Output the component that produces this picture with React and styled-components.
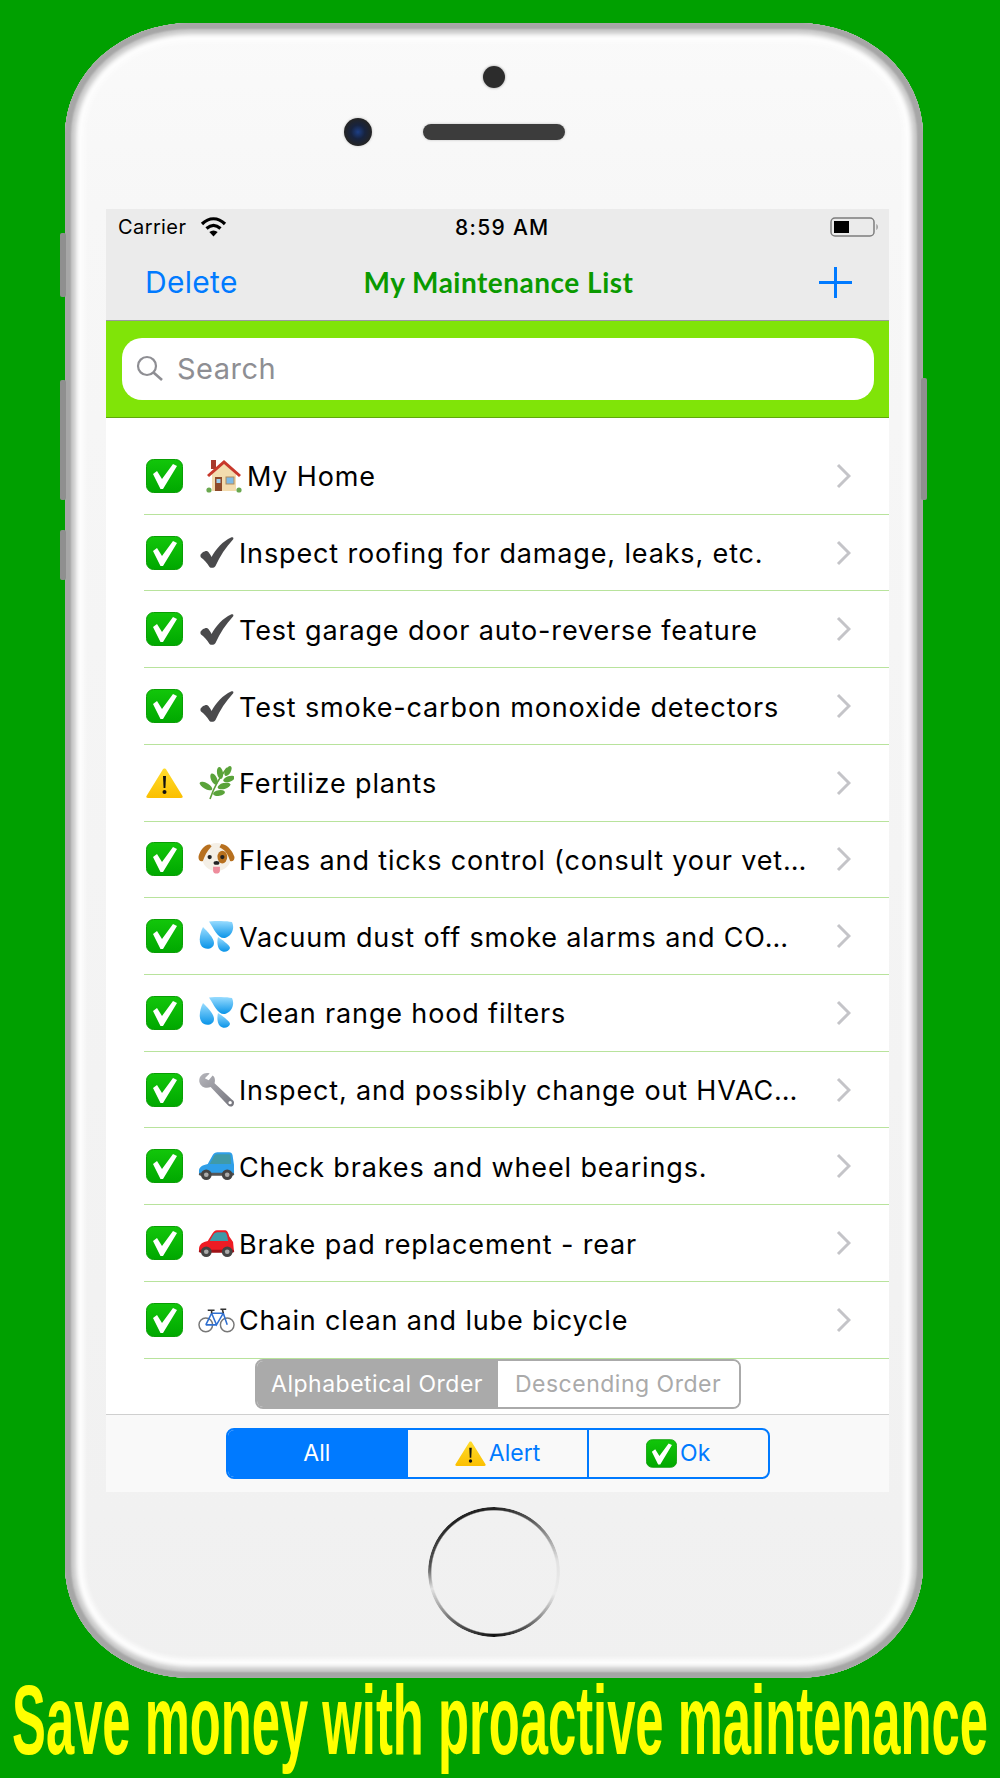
import React from 'react';
import styled, { createGlobalStyle } from 'styled-components';

const GlobalStyle = createGlobalStyle`
  html, body {
    margin: 0;
    padding: 0;
    background: #00a000;
    overflow: hidden;
  }
  body {
    font-family: Inter, "Liberation Sans", sans-serif;
  }
`;

const Page = styled.div`
  width: 1000px;
  height: 1778px;
  box-sizing: border-box;
  padding-top: 23px;
  background: #00a000;
  overflow: hidden;
`;

const Phone = styled.div`
  position: relative;
  width: 858px;
  height: 1655px;
  margin-left: 65px;
  box-sizing: border-box;
  padding: 0 34px 0 41px;
  border-radius: 125px / 112px;
  background: linear-gradient(#fafafa 0, #f7f7f7 11%, #f1f1f1 90%, #f0f0f0 100%);
  box-shadow:
    inset 0 0 0 1px #a8a8a8,
    inset 0 0 2px 6px #a6a6a6,
    inset 0 0 4px 11px #c9c9c9,
    inset 0 0 4px 19px #fdfdfd;
`;

const SideButton = styled.div`
  position: absolute;
  width: 6px;
  top: ${p => p.$top}px;
  height: ${p => p.$height}px;
  ${p => (p.$right ? 'right: -4px;' : 'left: -5px;')}
  background: #8f8f8f;
  border-radius: 2px;
`;

const TopBezel = styled.div`
  height: 186px;
  box-sizing: border-box;
  padding-top: 43px;
  display: flex;
  flex-direction: column;
  align-items: center;
`;

const Sensor = styled.div`
  width: 22px;
  height: 22px;
  margin-left: -7px;
  border-radius: 50%;
  background: #2c2c2c;
  box-shadow: 0 0 2px 1px #ccc;
`;

const SpeakerRow = styled.div`
  display: flex;
  align-items: center;
  gap: 51px;
  margin-top: 30px;
  margin-right: 86px;
`;

const Camera = styled.div`
  width: 28px;
  height: 28px;
  border-radius: 50%;
  background: radial-gradient(circle at 50% 50%, #1d3f86 0, #17233f 35%, #242424 70%);
  box-shadow: 0 0 2px 1px #ddd;
`;

const Speaker = styled.div`
  width: 142px;
  height: 16px;
  border-radius: 8px;
  background: #3c3c3c;
  box-shadow: 0 0 2px 1px #ddd;
`;

const Screen = styled.div`
  background: #fff;
  height: 1283px;
  display: flex;
  flex-direction: column;
`;

const StatusBar = styled.div`
  height: 38px;
  box-sizing: border-box;
  position: relative;
  display: flex;
  align-items: center;
  padding: 0 10px 2px 12px;
  background: #ebebeb;
  font-size: 20px;
  color: #000;
`;

const Carrier = styled.span`
  letter-spacing: 0.4px;
`;

const Clock = styled.span`
  position: absolute;
  left: 349px;
  font-size: 21px;
  font-weight: 500;
  letter-spacing: 1.3px;
`;

const NavBar = styled.div`
  height: 74px;
  box-sizing: border-box;
  display: grid;
  grid-template-columns: 1fr auto 1fr;
  align-items: center;
  padding: 0 37px 3px 39px;
  background: #ebebeb;
  border-bottom: 1px solid #9b9b9b;
`;

const NavButton = styled.span`
  font-size: 30px;
  color: #007aff;
  letter-spacing: 0.3px;
`;

const NavAction = styled.span`
  display: flex;
  justify-content: flex-end;
`;

const NavTitle = styled.span`
  font-family: Lato, sans-serif;
  font-size: 28px;
  font-weight: 700;
  color: #0a9a00;
  letter-spacing: 0.5px;
`;

const SearchBar = styled.div`
  height: 97px;
  box-sizing: border-box;
  padding: 17px 15px 0 16px;
  background: #80e408;
  border-bottom: 1px solid #5fa80a;
`;

const SearchField = styled.div`
  height: 62px;
  box-sizing: border-box;
  display: flex;
  align-items: center;
  gap: 14px;
  padding: 0 0 2px 14px;
  border-radius: 20px;
  background: #fff;
  font-size: 29px;
  letter-spacing: 0.5px;
  color: #8e8e93;
`;

const List = styled.div`
  padding-top: 20px;
`;

const Row = styled.div`
  height: 76.73px;
  box-sizing: border-box;
  margin-left: 38px;
  padding: 0 38px 0 2px;
  display: flex;
  align-items: center;
  border-bottom: 1px solid #b8e39c;
`;

const StatusSlot = styled.span`
  width: 37px;
  display: flex;
  flex: none;
`;

const EmojiSlot = styled.span`
  width: 37px;
  display: flex;
  flex: none;
  justify-content: center;
  margin: 0 ${p => (p.$wide ? 5 : 4)}px 0 ${p => (p.$wide ? 22 : 15)}px;
`;

const RowLabel = styled.span`
  flex: 1;
  padding-top: 2px;
  font-size: 27px;
  letter-spacing: 0.85px;
  color: #000;
  white-space: nowrap;
`;

const SortControl = styled.div`
  display: flex;
  width: 486px;
  height: 50px;
  box-sizing: border-box;
  margin: 0 auto 5px;
  border: 2px solid #aaa;
  border-radius: 8px;
  overflow: hidden;
`;

const SortOption = styled.div`
  flex: 1;
  display: flex;
  align-items: center;
  justify-content: center;
  font-size: 23px;
  letter-spacing: 0.5px;
  background: ${p => (p.$active ? '#aaa' : '#fff')};
  color: ${p => (p.$active ? '#fff' : '#aaa')};
`;

const TabBar = styled.div`
  flex: 1;
  box-sizing: border-box;
  padding-top: 13px;
  background: #f9f9f9;
  border-top: 1px solid #cfcfcf;
`;

const FilterControl = styled.div`
  display: flex;
  width: 544px;
  height: 51px;
  box-sizing: border-box;
  margin: 0 auto;
  border: 2px solid #007aff;
  border-radius: 8px;
  overflow: hidden;
`;

const FilterOption = styled.div`
  flex: 1;
  display: flex;
  align-items: center;
  justify-content: center;
  gap: 3px;
  font-size: 23px;
  background: ${p => (p.$active ? '#007aff' : 'transparent')};
  color: ${p => (p.$active ? '#fff' : '#007aff')};
  & + & {
    border-left: 2px solid #007aff;
  }
`;

const HomeArea = styled.div`
  height: 186px;
  display: flex;
  justify-content: center;
  padding-top: 15px;
  margin-left: -7px;
  box-sizing: border-box;
`;

const HomeButton = styled.div`
  width: 132px;
  height: 130px;
  border-radius: 50%;
  background: conic-gradient(
    #222 0deg,
    #555 35deg,
    #e2e2e2 80deg,
    #ececec 110deg,
    #555 150deg,
    #111 180deg,
    #555 215deg,
    #e2e2e2 255deg,
    #555 275deg,
    #222 320deg,
    #222 360deg
  );
  -webkit-mask: radial-gradient(closest-side, transparent 94%, #000 96%);
  mask: radial-gradient(closest-side, transparent 94%, #000 96%);
`;

const Caption = styled.div`
  display: flex;
  justify-content: center;
  align-items: center;
  height: 100px;
`;

const CaptionText = styled.span`
  flex: none;
  font-family: "Liberation Sans", Arial, sans-serif;
  font-size: 50.75px;
  line-height: 46px;
  font-weight: 700;
  color: #ff0;
  white-space: nowrap;
  transform: translateY(-7px) scaleY(1.92);
`;

const WifiIcon = () => (
  <svg width="27" height="20" viewBox="0 0 27 20" style={{ marginLeft: 14 }}>
    <path d="M2 7 C9 0 18 0 25 7" fill="none" stroke="#000" strokeWidth="3.2" />
    <path d="M6.5 11.5 C11 7.5 16 7.5 20.5 11.5" fill="none" stroke="#000" strokeWidth="3.2" />
    <path d="M13.5 19.5 L9.3 15 C12 13 15 13 17.7 15 Z" fill="#000" />
  </svg>
);

const BatteryIcon = () => (
  <svg width="49" height="20" viewBox="0 0 49 20" style={{ marginLeft: 'auto' }}>
    <rect x="1" y="1" width="43" height="18" rx="4" fill="none" stroke="#7d7d7d" strokeWidth="1.5" />
    <rect x="4" y="4" width="15" height="12" fill="#000" />
    <path d="M46.5 7 C48 8 48 12 46.5 13 Z" fill="#7d7d7d" />
  </svg>
);

const PlusIcon = () => (
  <svg width="33" height="31" viewBox="0 0 33 31">
    <path d="M16.5 0 V31 M0 15.5 H33" stroke="#007aff" strokeWidth="3" />
  </svg>
);

const SearchIcon = () => (
  <svg width="27" height="26" viewBox="0 0 27 26">
    <circle cx="11" cy="11" r="9" fill="none" stroke="#8e8e93" strokeWidth="2.2" />
    <path d="M17.5 17.5 L26 25" stroke="#8e8e93" strokeWidth="2.6" />
  </svg>
);

const Chevron = () => (
  <svg width="15" height="26" viewBox="0 0 15 26">
    <path d="M2 2 L13 13 L2 24" fill="none" stroke="#c4c4c8" strokeWidth="3" />
  </svg>
);

const OkIcon = ({ w = 37, h = 34 }) => (
  <svg width={w} height={h} viewBox="0 0 37 34">
    <defs>
      <linearGradient id="okFill" x1="0" y1="0" x2="0" y2="1">
        <stop offset="0" stopColor="#12c60a" />
        <stop offset="1" stopColor="#00a800" />
      </linearGradient>
    </defs>
    <rect x="0.5" y="0.5" width="36" height="33" rx="7" fill="url(#okFill)" stroke="#0a9e05" />
    <path d="M7 15 L11 12 L16 20 L27 5 L31 7 L17 30 L14.5 30 Z" fill="#fff" />
  </svg>
);

const AlertIcon = ({ w = 37, h = 30 }) => (
  <svg width={w} height={h} viewBox="0 0 37 30">
    <defs>
      <linearGradient id="alertFill" x1="0" y1="0" x2="0" y2="1">
        <stop offset="0" stopColor="#ffdc2e" />
        <stop offset="1" stopColor="#fbbf00" />
      </linearGradient>
    </defs>
    <path d="M18.5 0.5 C19.5 0.5 20 1 20.5 2 L36.5 28 C37 29 36.5 30 35 30 L2 30 C0.5 30 0 29 0.5 28 L16.5 2 C17 1 17.5 0.5 18.5 0.5 Z" fill="url(#alertFill)" />
    <path d="M17 8 H20 L19.4 20 H17.6 Z" fill="#111" />
    <circle cx="18.5" cy="24" r="2" fill="#111" />
  </svg>
);

const CheckMark = () => (
  <svg width="34" height="31" viewBox="0 0 34 31">
    <path d="M0.5 18 C1 16 5 13.5 7 14 C9 15 10.5 18 11.5 20 C16 12 23 4 31 0.5 C33 0 34 1 33 2.5 C26 10 20 19 15.5 29 C14.5 31 11 31.5 9.5 30 C7 26 4 22.5 1 20.5 C0.5 20 0.3 19 0.5 18 Z" fill="#4a4a4c" />
  </svg>
);

const HouseIcon = () => (
  <svg width="36" height="34" viewBox="0 0 36 34">
    <rect x="5" y="1" width="5" height="9" fill="#a8392e" />
    <path d="M6 15 L18 4 L30 15 V32 H6 Z" fill="#f3dcae" />
    <path d="M1 16 L18 1 L35 16 L33 18 L18 5 L3 18 Z" fill="#c8382b" />
    <rect x="9" y="18" width="7" height="14" fill="#8e4a2a" />
    <rect x="10.5" y="20" width="4" height="4" fill="#9fd0ee" />
    <rect x="20" y="18" width="8" height="7" fill="#7db9e4" stroke="#b08a5a" />
    <circle cx="3" cy="31" r="2.6" fill="#6aa84f" />
    <circle cx="33" cy="31" r="2.6" fill="#6aa84f" />
  </svg>
);

const HerbIcon = () => (
  <svg width="35" height="34" viewBox="0 0 35 34">
    <path d="M11 33 C14 24 20 12 28 2" fill="none" stroke="#5f9f3a" strokeWidth="1.6" />
    <g fill="#5aa33a">
      <ellipse cx="29" cy="5" rx="2.8" ry="5.5" transform="rotate(30 29 5)" />
      <ellipse cx="21" cy="7" rx="3" ry="6" transform="rotate(-10 21 7)" />
      <ellipse cx="30" cy="13" rx="2.8" ry="6" transform="rotate(70 30 13)" />
      <ellipse cx="15" cy="13" rx="3" ry="6" transform="rotate(-25 15 13)" />
      <ellipse cx="25" cy="20" rx="3" ry="6.5" transform="rotate(75 25 20)" />
      <ellipse cx="7" cy="20" rx="3" ry="7" transform="rotate(-60 7 20)" />
      <ellipse cx="20" cy="27" rx="2.8" ry="6" transform="rotate(80 20 27)" />
    </g>
  </svg>
);

const DogIcon = () => (
  <svg width="38" height="34" viewBox="0 0 38 34">
    <ellipse cx="19" cy="15" rx="15" ry="14.5" fill="#f4efe6" />
    <path d="M12 2 C6 2 1 10 0.5 15 C0.5 19 3 20 5 19 C7 14 9 9 14 4 Z" fill="#b7701f" />
    <path d="M24 1.5 C31 2 36 10 37.5 15 C37.5 19 35 20 33 19 C31 14 30 9 22 5 Z" fill="#b7701f" />
    <ellipse cx="25" cy="15" rx="5" ry="6.5" fill="#b7701f" />
    <circle cx="12" cy="15" r="2.2" fill="#222" />
    <circle cx="25" cy="15" r="2.2" fill="#222" />
    <ellipse cx="19" cy="21" rx="3" ry="2" fill="#222" />
    <path d="M15.5 25 H22.5 V29 C22.5 33 15.5 33 15.5 29 Z" fill="#ee8c9c" />
  </svg>
);

const DropsIcon = () => (
  <svg width="35" height="31" viewBox="0 0 35 31">
    <defs>
      <linearGradient id="dropFill" x1="0" y1="0" x2="0" y2="1">
        <stop offset="0" stopColor="#98dcff" />
        <stop offset="1" stopColor="#0a94e8" />
      </linearGradient>
    </defs>
    <path d="M10 0.5 C16 -0.5 28 0 33 1 C36 7 33 15 26 17 C19 18 15 8 10 0.5 Z" fill="url(#dropFill)" />
    <path d="M4 6 C8 10 15 17 15 22 C15 27 9 29 5 27 C-1 24 0 14 4 6 Z" fill="url(#dropFill)" />
    <path d="M19 16 C22 18 31 24 31 27 C30 31 24 32 21 29 C18 26 18 20 19 16 Z" fill="url(#dropFill)" />
  </svg>
);

const WrenchIcon = () => (
  <svg width="38" height="36" viewBox="0 0 38 36">
    <defs>
      <linearGradient id="wrenchFill" x1="0" y1="0" x2="1" y2="1">
        <stop offset="0" stopColor="#b5b5bb" />
        <stop offset="1" stopColor="#74747c" />
      </linearGradient>
    </defs>
    <path d="M12 1 C6 -1 0 4 1.5 10 C3 15 8 17 13 15 L31 34 C33 36 37 35 37 31 C37 29 36 29 35 28 L17 11 C18 7 17 4 15 3 L11 8 L7 6 Z" fill="url(#wrenchFill)" />
    <circle cx="33" cy="31" r="1.7" fill="#fff" />
  </svg>
);

const CarIcon = ({ body, shade, red }) => (
  <svg width="38" height="30" viewBox="0 0 38 30">
    {red ? (
      <>
        <path d="M1 22 C1 16 5 14 10 13 L15 5 C17 2 19 2 21 2 L27 2 C30 2 31 4 32 8 L36 14 L37 24 L1 24 Z" fill={body} />
        <path d="M12 13 L16 6 C17 4.5 19 4 21 4 H27 C29 4 29.5 6 30 8 L31 13 Z" fill="#3f9aa8" />
      </>
    ) : (
      <>
        <path d="M1 20 C1 16 5 14 10 13 L15 4 C16 2 18 1 20 1 L32 1 C34 1 35 2 35.5 4 L37 14 L37 24 L1 24 Z" fill={body} />
        <path d="M12 13 L17 4 C18 3 19 3 21 3 H32 C33 3 33.5 4 33.5 5 L34 13 Z" fill="#3f9aa8" />
      </>
    )}
    <rect x="1" y="22" width="36" height="3" rx="1.5" fill={shade} />
    <circle cx="8.5" cy="24" r="5.5" fill="#444" />
    <circle cx="8.5" cy="24" r="2.4" fill="#aaa" />
    <circle cx="30" cy="24" r="5.5" fill="#444" />
    <circle cx="30" cy="24" r="2.4" fill="#aaa" />
  </svg>
);

const BikeIcon = () => (
  <svg width="38" height="26" viewBox="0 0 38 26">
    <circle cx="8" cy="18" r="7" fill="none" stroke="#777" strokeWidth="1.5" />
    <circle cx="30" cy="18" r="7" fill="none" stroke="#777" strokeWidth="1.5" />
    <path d="M8 18 L14 6 H26 L30 18 M14 6 L19 18 L26 6 M8 18 H19" fill="none" stroke="#2f6fd0" strokeWidth="1.6" />
    <path d="M10 3 H17 M14 3 V6 M23 2 H29 M25 2 L26 6" fill="none" stroke="#333" strokeWidth="1.6" />
  </svg>
);

const rows = [
  { icon: <HouseIcon />, label: 'My Home', wide: true },
  { icon: <CheckMark />, label: 'Inspect roofing for damage, leaks, etc.' },
  { icon: <CheckMark />, label: 'Test garage door auto-reverse feature' },
  { icon: <CheckMark />, label: 'Test smoke-carbon monoxide detectors' },
  { icon: <HerbIcon />, label: 'Fertilize plants', alert: true },
  { icon: <DogIcon />, label: 'Fleas and ticks control (consult your vet…' },
  { icon: <DropsIcon />, label: 'Vacuum dust off smoke alarms and CO…' },
  { icon: <DropsIcon />, label: 'Clean range hood filters' },
  { icon: <WrenchIcon />, label: 'Inspect, and possibly change out HVAC…' },
  { icon: <CarIcon body="#2f9fe8" shade="#555" />, label: 'Check brakes and wheel bearings.' },
  { icon: <CarIcon body="#ee1c24" shade="#a01218" red />, label: 'Brake pad replacement - rear' },
  { icon: <BikeIcon />, label: 'Chain clean and lube bicycle' },
];

export default function App() {
  return (
    <Page>
      <GlobalStyle />
      <Phone>
        <SideButton $top={210} $height={64} />
        <SideButton $top={357} $height={120} />
        <SideButton $top={507} $height={50} />
        <SideButton $right $top={355} $height={122} />
        <TopBezel>
          <Sensor />
          <SpeakerRow>
            <Camera />
            <Speaker />
          </SpeakerRow>
        </TopBezel>
        <Screen>
          <StatusBar>
            <Carrier>Carrier</Carrier>
            <WifiIcon />
            <Clock>8:59 AM</Clock>
            <BatteryIcon />
          </StatusBar>
          <NavBar>
            <NavButton>Delete</NavButton>
            <NavTitle>My Maintenance List</NavTitle>
            <NavAction>
              <PlusIcon />
            </NavAction>
          </NavBar>
          <SearchBar>
            <SearchField>
              <SearchIcon />
              Search
            </SearchField>
          </SearchBar>
          <List>
            {rows.map((row, i) => (
              <Row key={i}>
                <StatusSlot>{row.alert ? <AlertIcon /> : <OkIcon />}</StatusSlot>
                <EmojiSlot $wide={row.wide}>{row.icon}</EmojiSlot>
                <RowLabel>{row.label}</RowLabel>
                <Chevron />
              </Row>
            ))}
          </List>
          <SortControl>
            <SortOption $active>Alphabetical Order</SortOption>
            <SortOption>Descending Order</SortOption>
          </SortControl>
          <TabBar>
            <FilterControl>
              <FilterOption $active>All</FilterOption>
              <FilterOption>
                <AlertIcon w={31} h={25} />
                Alert
              </FilterOption>
              <FilterOption>
                <OkIcon w={31} h={29} />
                Ok
              </FilterOption>
            </FilterControl>
          </TabBar>
        </Screen>
        <HomeArea>
          <HomeButton />
        </HomeArea>
      </Phone>
      <Caption>
        <CaptionText>Save money with proactive maintenance</CaptionText>
      </Caption>
    </Page>
  );
}
